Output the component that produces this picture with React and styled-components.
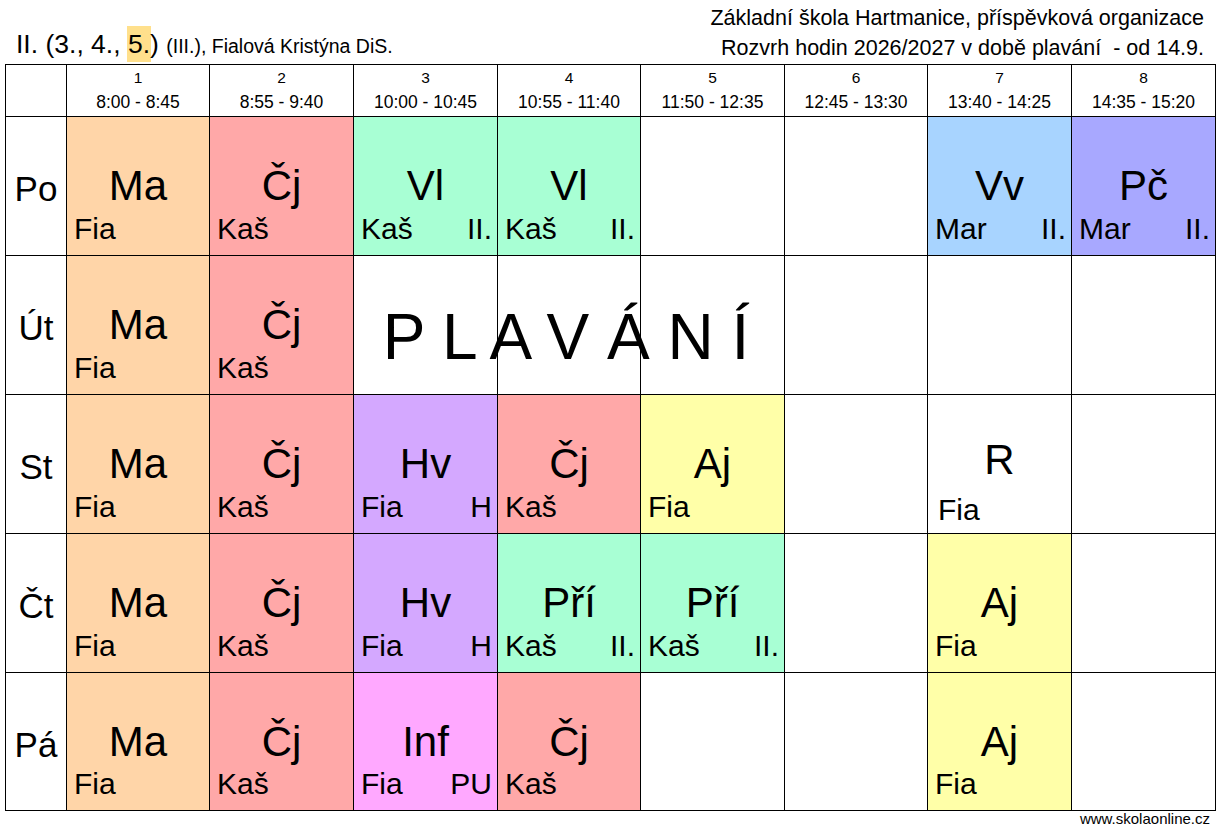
import React from "react";
import styled, { createGlobalStyle } from "styled-components";

const GlobalStyle = createGlobalStyle`
  html, body { margin: 0; padding: 0; background: #fff; }
  body { font-family: "Liberation Sans", Arial, sans-serif; color: #000; }
`;

const COLORS = {
  ma: "#FFD5A8",
  cj: "#FFA8A8",
  vl: "#A8FFD4",
  hv: "#D4A8FF",
  inf: "#FFA8FF",
  vv: "#A8D4FF",
  pc: "#A8A8FF",
  aj: "#FFFFA8",
  none: "#FFFFFF",
};

const Page = styled.div`
  width: 1219px;
  height: 829px;
  overflow: hidden;
`;

const Header = styled.header`
  height: 64px;
  display: flex;
  justify-content: space-between;
  align-items: flex-end;
  padding: 0 15px 0 16px;
  box-sizing: border-box;
`;

const ClassTitle = styled.div`
  font-size: 26.5px;
  line-height: 36px;
  white-space: nowrap;
`;

const Marked = styled.span`
  display: inline-block;
  background: #FFE08C;
  padding: 0 1px;
  margin: 0 -1px;
`;

const Teacher = styled.span`
  font-size: 19.5px;
`;

const SchoolInfo = styled.div`
  font-size: 21.5px;
  line-height: 30px;
  text-align: right;
  margin-bottom: 1px;
  white-space: pre;
`;

const Grid = styled.div`
  margin-left: 5px;
  display: grid;
  grid-template-columns: 60px 142px 143px 143px 142px 143px 142px 143px 143px;
  grid-template-rows: 51px repeat(4, 138px) 137px;
  gap: 1px;
  background: #000;
  border: 1px solid #000;
  width: max-content;
`;

const HeadCell = styled.div`
  background: #fff;
  display: flex;
  flex-direction: column;
  align-items: center;
`;

const PeriodNo = styled.div`
  font-size: 15.5px;
  line-height: 21px;
  margin-top: 2px;
`;

const PeriodTime = styled.div`
  font-size: 17.5px;
  line-height: 25px;
  margin-top: 2px;
  white-space: nowrap;
`;

const DayCell = styled.div`
  background: #fff;
  display: flex;
  align-items: center;
  justify-content: center;
  font-size: 35px;
  padding-top: 6px;
  box-sizing: border-box;
`;

const Lesson = styled.div`
  background: ${(p) => COLORS[p.$tone] || "#fff"};
  display: grid;
  grid-template-rows: 1fr auto 1fr;
  box-sizing: border-box;
`;

const Subject = styled.div`
  grid-row: 2;
  text-align: center;
  font-size: 42px;
  line-height: 42px;
  margin-bottom: ${(p) => (p.$shifted ? "9px" : "0")};
`;

const LessonFoot = styled.div`
  grid-row: 3;
  align-self: end;
  display: flex;
  justify-content: space-between;
  font-size: 30px;
  line-height: 30px;
  padding: 0 5px ${(p) => (p.$shifted ? "8px" : "11px")}
    ${(p) => (p.$shifted ? "10px" : "7px")};
`;

const SwimCell = styled.div`
  grid-column: span 3;
  background: #fff;
  position: relative;
  display: flex;
  align-items: center;
  justify-content: center;
  padding: 24px 6px 0 0;
  box-sizing: border-box;
  font-size: 64px;
  white-space: pre;

  &::before,
  &::after {
    content: "";
    position: absolute;
    top: 0;
    bottom: 0;
    width: 1px;
    background: #000;
  }
  &::before { left: 143px; }
  &::after { left: 286px; }
`;

const Footer = styled.div`
  text-align: right;
  font-size: 15px;
  line-height: 16px;
  padding-right: 9px;
`;

const periods = [
  ["1", "8:00 - 8:45"],
  ["2", "8:55 - 9:40"],
  ["3", "10:00 - 10:45"],
  ["4", "10:55 - 11:40"],
  ["5", "11:50 - 12:35"],
  ["6", "12:45 - 13:30"],
  ["7", "13:40 - 14:25"],
  ["8", "14:35 - 15:20"],
];

const L = (s, t, tone, r = "", shifted = false) => ({ s, t, tone, r, shifted });

const days = [
  {
    name: "Po",
    cells: [
      L("Ma", "Fia", "ma"),
      L("Čj", "Kaš", "cj"),
      L("Vl", "Kaš", "vl", "II."),
      L("Vl", "Kaš", "vl", "II."),
      null,
      null,
      L("Vv", "Mar", "vv", "II."),
      L("Pč", "Mar", "pc", "II."),
    ],
  },
  {
    name: "Út",
    cells: [L("Ma", "Fia", "ma"), L("Čj", "Kaš", "cj"), "swim", null, null, null],
  },
  {
    name: "St",
    cells: [
      L("Ma", "Fia", "ma"),
      L("Čj", "Kaš", "cj"),
      L("Hv", "Fia", "hv", "H"),
      L("Čj", "Kaš", "cj"),
      L("Aj", "Fia", "aj"),
      null,
      L("R", "Fia", "none", "", true),
      null,
    ],
  },
  {
    name: "Čt",
    cells: [
      L("Ma", "Fia", "ma"),
      L("Čj", "Kaš", "cj"),
      L("Hv", "Fia", "hv", "H"),
      L("Pří", "Kaš", "vl", "II."),
      L("Pří", "Kaš", "vl", "II."),
      null,
      L("Aj", "Fia", "aj"),
      null,
    ],
  },
  {
    name: "Pá",
    cells: [
      L("Ma", "Fia", "ma"),
      L("Čj", "Kaš", "cj"),
      L("Inf", "Fia", "inf", "PU"),
      L("Čj", "Kaš", "cj"),
      null,
      null,
      L("Aj", "Fia", "aj"),
      null,
    ],
  },
];

function LessonCell({ lesson }) {
  if (!lesson) return <Lesson $tone="none" />;
  return (
    <Lesson $tone={lesson.tone}>
      <Subject $shifted={lesson.shifted}>{lesson.s}</Subject>
      <LessonFoot $shifted={lesson.shifted}>
        <span>{lesson.t}</span>
        <span>{lesson.r}</span>
      </LessonFoot>
    </Lesson>
  );
}

export default function App() {
  return (
    <Page>
      <GlobalStyle />
      <Header>
        <ClassTitle>
          II. (3., 4., <Marked>5.</Marked>) <Teacher>(III.), Fialová Kristýna DiS.</Teacher>
        </ClassTitle>
        <SchoolInfo>
          {"Základní škola Hartmanice, příspěvková organizace\nRozvrh hodin 2026/2027 v době plavání  - od 14.9."}
        </SchoolInfo>
      </Header>
      <Grid>
        <HeadCell />
        {periods.map(([n, t]) => (
          <HeadCell key={n}>
            <PeriodNo>{n}</PeriodNo>
            <PeriodTime>{t}</PeriodTime>
          </HeadCell>
        ))}
        {days.map((d) => (
          <React.Fragment key={d.name}>
            <DayCell>{d.name}</DayCell>
            {d.cells.map((c, i) =>
              c === "swim" ? (
                <SwimCell key={i}>P L A V Á N Í</SwimCell>
              ) : (
                <LessonCell key={i} lesson={c} />
              )
            )}
          </React.Fragment>
        ))}
      </Grid>
      <Footer>www.skolaonline.cz</Footer>
    </Page>
  );
}
